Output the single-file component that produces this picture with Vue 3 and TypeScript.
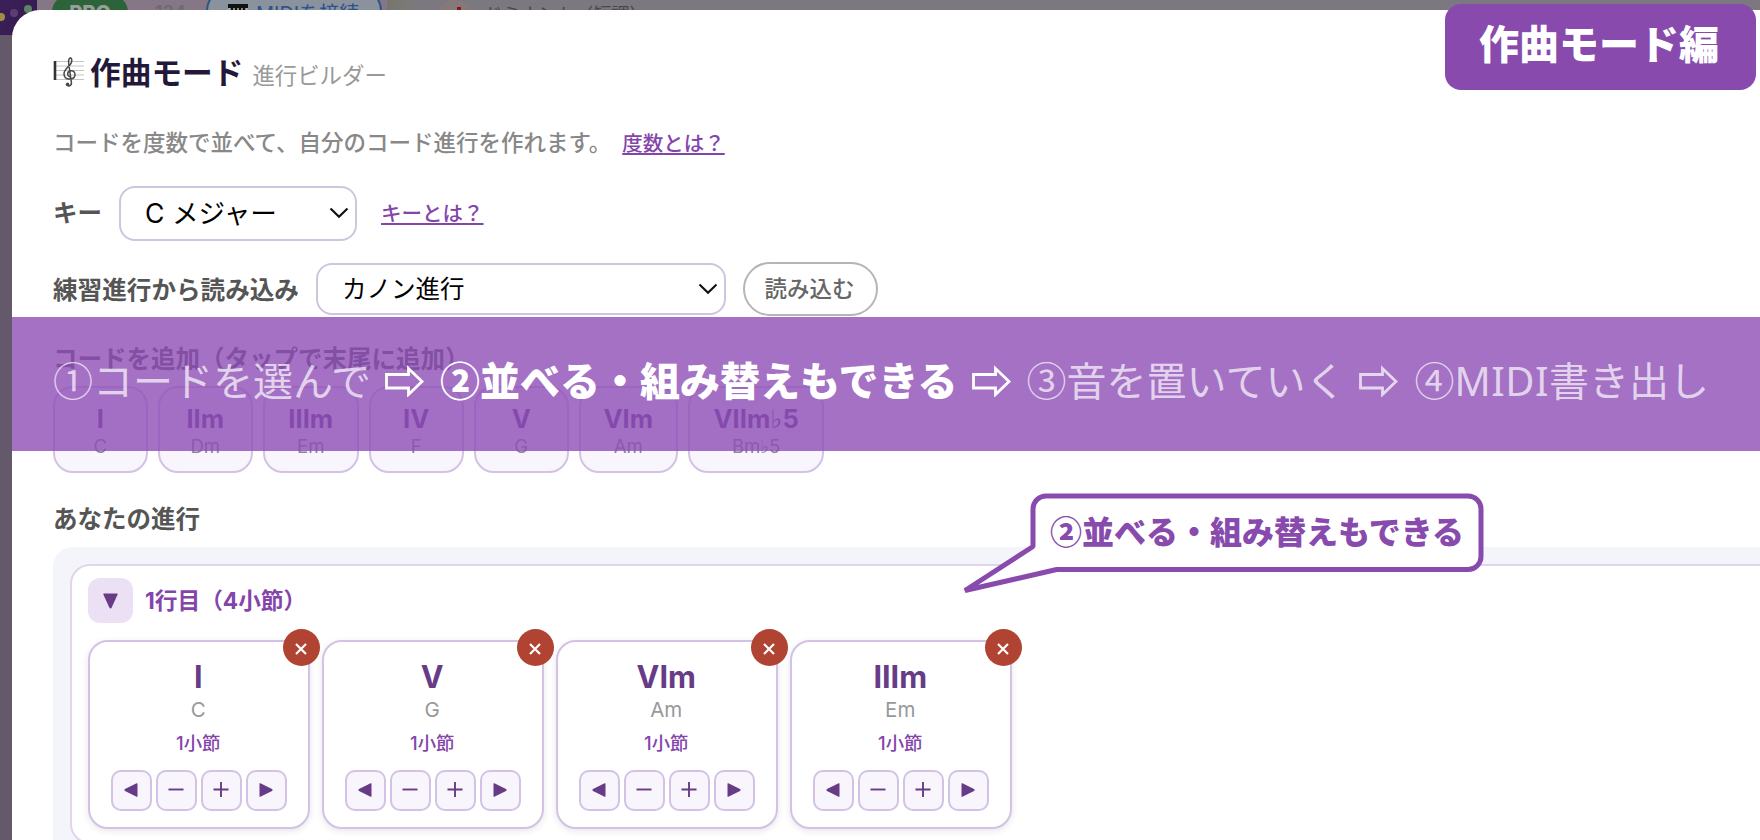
<script setup lang="ts">
interface Chord {
  degree: string
  name: string
}

const palette: Chord[] = [
  { degree: 'I', name: 'C' },
  { degree: 'IIm', name: 'Dm' },
  { degree: 'IIIm', name: 'Em' },
  { degree: 'IV', name: 'F' },
  { degree: 'V', name: 'G' },
  { degree: 'VIm', name: 'Am' },
  { degree: 'VIIm♭5', name: 'Bm♭5' },
]

const progression: Chord[] = [
  { degree: 'I', name: 'C' },
  { degree: 'V', name: 'G' },
  { degree: 'VIm', name: 'Am' },
  { degree: 'IIIm', name: 'Em' },
]
</script>

<template>
  <div class="screen">
    <div class="backdrop">
      <div class="app-logo"><i class="dot yellow"></i><i class="dot violet"></i><i class="dot green"></i></div>
      <div class="app-bar">
        <span class="pro">PRO</span>
        <span class="count">134</span>
        <span class="midi">
          <svg width="20" height="16" viewBox="0 0 20 16"><path fill="#111" d="M0 0h20v4H0z" /><path fill="#aaa" d="M0 4h20v12H0z" /><path stroke="#111" stroke-width="2.4" d="M4 4v8M8 4v8M12 4v8M16 4v8" /></svg>
          MIDIを接続
        </span>
      </div>
      <div class="side">
        <span class="side-icon"><i></i></span>
        <span class="side-text">ドミナント（短調）</span>
      </div>
    </div>

    <section class="modal">
      <h1 class="title">
        <svg class="score" width="32" height="32" viewBox="0 0 32 32" fill="none">
          <path d="M3 5.5h28M3 10h28M3 14.500h28M3 19h28M3 23.500h28" stroke="#c4c4c4" stroke-width="1" />
          <path d="M2 5v19" stroke="#333" stroke-width="2.600" />
          <path d="M13.500 28.500c1.500 2.400 5.300 1.500 4.900-1.800L15.700 7.500c-.4-3 .5-5.400 2-5.700 1.500.8 1.500 4.300-.3 6.500-2.200 2.700-6.400 5.200-6.400 9.500 0 3.600 2.600 5.300 5.600 5.300 3.200 0 5.400-1.800 5.400-4.500 0-2.300-1.600-3.800-3.600-3.800-2.200 0-3.700 1.500-3.700 3.300 0 1.500.8 2.400 1.900 2.700" stroke="#484848" stroke-width="1.500" stroke-linecap="round" />
          <circle cx="14.600" cy="28.300" r="1.700" fill="#484848" />
        </svg>
        <span class="title-main">作曲モード</span>
        <span class="title-sub">進行ビルダー</span>
      </h1>

      <p class="desc">コードを度数で並べて、自分のコード進行を作れます。<a class="link">度数とは？</a></p>

      <div class="row key-row">
        <span class="label">キー</span>
        <div class="select key-select">
          <span>C メジャー</span>
          <svg width="20" height="12" viewBox="0 0 20 12"><path d="M1.500 1.500 10 9.700l8.500-8.200" fill="none" stroke="#111" stroke-width="2.200" /></svg>
        </div>
        <a class="link">キーとは？</a>
      </div>

      <div class="row load-row">
        <span class="label">練習進行から読み込み</span>
        <div class="select load-select">
          <span>カノン進行</span>
          <svg width="20" height="12" viewBox="0 0 20 12"><path d="M1.500 1.500 10 9.700l8.500-8.200" fill="none" stroke="#111" stroke-width="2.200" /></svg>
        </div>
        <button class="load">読み込む</button>
      </div>

      <div class="label add-label">コードを追加（タップで末尾に追加）</div>
      <div class="palette">
        <button v-for="c in palette" :key="c.degree" class="chip">
          <b>{{ c.degree }}</b>
          <span>{{ c.name }}</span>
        </button>
      </div>

      <div class="label own-label">あなたの進行</div>
      <div class="tray">
        <div class="line">
          <div class="line-head">
            <button class="fold"><svg width="15" height="16" viewBox="0 0 15 16"><path d="M1 .5h13q1 0 .6 1L8.700 14.500q-1.200 2-2.400 0L.4 1.500Q0 .5 1 .5z" fill="#673b86" /></svg></button>
            <span>1行目（4小節）</span>
          </div>
          <div class="cards">
            <article v-for="c in progression" :key="c.degree" class="card">
              <button class="remove"><svg width="12" height="12" viewBox="0 0 12 12"><path d="m1 1 10 10M11 1 1 11" stroke="#fff" stroke-width="2.200" /></svg></button>
              <b class="degree">{{ c.degree }}</b>
              <span class="name">{{ c.name }}</span>
              <span class="bars">1小節</span>
              <div class="tools">
                <button><svg width="14" height="14" viewBox="0 0 14 14"><path d="M13.500.8v12.400q0 .8-.9.600L1 8q-1.200-1 0-2L12.600.2q.9-.2.900.6z" fill="#673b86" /></svg></button>
                <button><svg width="16" height="16" viewBox="0 0 16 16"><path d="M.5 7.500h15" stroke="#673b86" stroke-width="1.900" /></svg></button>
                <button><svg width="16" height="16" viewBox="0 0 16 16"><path d="M.5 7.500h15M8 0v15" stroke="#673b86" stroke-width="1.900" /></svg></button>
                <button><svg width="14" height="14" viewBox="0 0 14 14"><path d="M.5.8v12.400q0 .8.900.600L13 8q1.200-1 0-2L1.400.2Q.5 0 .5.800z" fill="#673b86" /></svg></button>
              </div>
            </article>
          </div>
        </div>
      </div>
    </section>

    <div class="banner">
      <span class="step">①コードを選んで</span>
      <svg class="arrow" width="40" height="32" viewBox="0 0 40 32"><path d="M1.500 9.500h22V3.500l13.500 13-13.500 13v-6.500h-22z" fill="none" stroke="#fff" stroke-width="2.800" /></svg>
      <span class="step current">②並べる・組み替えもできる</span>
      <svg class="arrow" width="40" height="32" viewBox="0 0 40 32"><path d="M1.500 9.500h22V3.500l13.500 13-13.500 13v-6.500h-22z" fill="none" stroke="#fff" stroke-width="2.800" /></svg>
      <span class="step">③音を置いていく</span>
      <svg class="arrow dim" width="40" height="32" viewBox="0 0 40 32"><path d="M1.500 9.500h22V3.500l13.500 13-13.500 13v-6.500h-22z" fill="none" stroke="#fff" stroke-width="2.800" /></svg>
      <span class="step">④<span class="latin">MIDI</span>書き出し</span>
    </div>

    <div class="callout">
      <svg width="526" height="100" viewBox="0 0 526 100">
        <path d="M88 2h422a13 13 0 0 1 13 13v47.500a13 13 0 0 1-13 13H98.700L7 96.500 75 52.500V15a13 13 0 0 1 13-13z" fill="#fff" stroke="#884bad" stroke-width="5" stroke-linejoin="bevel" />
      </svg>
      <span>②並べる・組み替えもできる</span>
    </div>

    <div class="badge">作曲モード編</div>
  </div>
</template>

<style>
html,
body {
  margin: 0;
  overflow: hidden;
}
</style>

<style scoped>
.screen {
  position: relative;
  width: 1760px;
  height: 840px;
  overflow: hidden;
  background: #63596b;
  font-family: Inter, 'Noto Sans CJK JP', sans-serif;
}
.screen * {
  box-sizing: border-box;
}
button {
  font: inherit;
  padding: 0;
  margin: 0;
}
.backdrop {
  display: flex;
  height: 35px;
}
.app-logo {
  position: relative;
  width: 37px;
  height: 35px;
  background: linear-gradient(120deg, #3d2059, #321a4b);
  border-radius: 0 0 4px 0;
}
.dot {
  position: absolute;
  width: 8px;
  height: 8px;
  border-radius: 50%;
}
.yellow { left: -3px; top: 13px; background: #a38c45; }
.violet { left: 10px; top: 9px; background: #5b3d73; }
.green { left: 24px; top: 5px; background: #5c8565; }
.app-bar {
  position: relative;
  display: flex;
  width: 350px;
  height: 10px;
  overflow: hidden;
  background: #857786;
}
.pro {
  width: 76px;
  height: 34px;
  margin: -5px 0 0 15px;
  border-radius: 17px;
  background: #2c6338;
  color: #9a9e9a;
  font-size: 20px;
  font-weight: 800;
  line-height: 37px;
  text-align: center;
}
.count {
  margin: 4px 0 0 27px;
  width: 51px;
  color: #70696f;
  font-size: 18px;
  line-height: 18px;
  font-weight: 600;
}
.midi {
  display: flex;
  width: 176px;
  height: 50px;
  margin-top: -13px;
  padding: 14px 0 0 20px;
  gap: 8px;
  border: 2px solid #2c5488;
  border-radius: 24px;
  background: #8a929e;
  color: #2c5488;
  font-size: 20px;
  line-height: 22px;
  white-space: nowrap;
}
.midi svg {
  margin-top: 1px;
}
.side {
  display: flex;
  flex: 1;
  height: 10px;
  overflow: hidden;
  background: linear-gradient(90deg, #78756f, #7b7a77 20px, #7c7880 36px);
}
.side-icon {
  width: 36px;
  height: 36px;
  margin: 0 11px 0 50px;
  border-radius: 50%;
  background: #85797a;
}
.side-icon i {
  display: block;
  width: 4px;
  height: 4px;
  margin: 7px 0 0 20px;
  background: #8c1418;
}
.side-text {
  margin-top: 4px;
  color: #4b474d;
  font-size: 18.200px;
  line-height: 20px;
}
.modal {
  position: absolute;
  left: 12px;
  top: 10px;
  width: 1800px;
  height: 860px;
  padding-left: 41px;
  border-radius: 28px 0 0 0;
  background: #fff;
}
.title {
  display: flex;
  align-items: center;
  height: 44px;
  margin: 41px 0 0;
}
.score {
  margin-right: 5px;
  margin-top: -2px;
}
.title-main {
  color: #24183a;
  font-size: 30.700px;
  font-weight: 700;
  line-height: 44px;
}
.title-sub {
  margin: 2px 0 0 9px;
  color: #999;
  font-size: 22.400px;
  font-weight: 400;
}
.desc {
  display: flex;
  align-items: center;
  height: 34px;
  margin: 29px 0 0;
  color: #888;
  font-size: 22.500px;
  font-weight: 500;
}
.link {
  color: #8445ab;
  font-size: 20.500px;
  font-weight: 500;
  text-decoration: underline;
  text-decoration-thickness: 2px;
  text-underline-offset: 2px;
}
.desc .link {
  margin: 1px 0 0 11px;
}
.row {
  display: flex;
  align-items: center;
}
.key-row {
  height: 56px;
  margin-top: 27px;
}
.key-row > .label,
.load-row > .label,
.key-row > .link,
.select > span {
  position: relative;
  top: -1.500px;
}
.load-row {
  height: 54px;
  margin-top: 21px;
}
.label {
  color: #555;
  font-size: 24.500px;
  font-weight: 700;
  white-space: nowrap;
}
.load-row > .label {
  width: 245px;
  font-size: 24.600px;
}
.select {
  display: flex;
  align-items: center;
  justify-content: space-between;
  border: 2px solid #cdc6df;
  border-radius: 16px;
  color: #000;
}
.key-select {
  width: 238px;
  height: 55px;
  margin: 0 24px 0 17px;
  padding: 0 6px 0 24px;
  font-size: 26.600px;
}
.load-select {
  width: 410px;
  height: 52px;
  margin: 0 17px 0 18px;
  padding: 0 6px 0 24px;
  font-size: 24.500px;
}
.load {
  width: 135px;
  height: 54px;
  padding: 0 2px 4px 0;
  border: 2px solid #b5b5b5;
  border-radius: 27px;
  background: #fff;
  color: #666;
  font-size: 22.500px;
  font-weight: 500;
}
.add-label {
  margin-top: 25px;
  line-height: 36px;
}
.palette {
  display: flex;
  gap: 10.500px;
  margin-top: 9px;
}
.chip {
  display: flex;
  flex-direction: column;
  align-items: center;
  min-width: 94.500px;
  height: 87px;
  padding: 16px 22.500px 0;
  border: 2px solid #d3c2e5;
  border-radius: 20px;
  background: #f8f5fd;
  font-family: Inter, 'DejaVu Sans', sans-serif;
}
.chip:nth-child(3) {
  min-width: 95.500px;
}
.chip:last-child {
  min-width: 136px;
}
.chip b {
  color: #673b86;
  font-size: 25.600px;
  font-weight: 700;
  line-height: 30px;
}
.chip span {
  color: #8d8296;
  font-size: 18.600px;
  line-height: 24px;
}
.own-label {
  margin-top: 28px;
  line-height: 36px;
}
.tray {
  width: 1760px;
  height: 320px;
  margin-top: 10px;
  padding: 17px;
  border-radius: 20px;
  background: #f4f5fa;
}
.line {
  height: 280px;
  padding: 12px 16px;
  border: 2px solid #e1d5ee;
  border-radius: 20px;
  background: #fff;
}
.line-head {
  display: flex;
  align-items: center;
  height: 45px;
  gap: 12px;
  color: #8445ab;
  font-size: 22.700px;
  font-weight: 700;
}
.line-head span {
  margin-top: -3px;
}
.fold {
  display: flex;
  align-items: center;
  justify-content: center;
  width: 45px;
  height: 45px;
  border: 0;
  border-radius: 12px;
  background: #ece0f5;
}
.cards {
  display: flex;
  gap: 12px;
  margin-top: 17px;
}
.card {
  position: relative;
  display: flex;
  flex-direction: column;
  align-items: center;
  width: 222px;
  height: 189px;
  border: 2px solid #d3c2e5;
  border-radius: 20px;
  background: #fff;
  box-shadow: 0 2px 7px rgba(0, 0, 0, 0.1);
}
.card > b,
.card > span {
  padding-right: 1.500px;
}
.remove {
  position: absolute;
  right: -12px;
  top: -13px;
  display: flex;
  align-items: center;
  justify-content: center;
  width: 37px;
  height: 37px;
  padding: 3px 1px 0 0;
  border: 0;
  border-radius: 50%;
  background: #b04332;
}
.degree {
  margin-top: 17px;
  color: #673b86;
  font-size: 30.600px;
  line-height: 36px;
}
.name {
  margin-top: 1px;
  color: #999;
  font-size: 20.500px;
  line-height: 28px;
}
.bars {
  margin-top: 5px;
  color: #8445ab;
  font-size: 18.400px;
  font-weight: 500;
  line-height: 28px;
}
.tools {
  display: flex;
  gap: 4px;
  margin-top: 13px;
}
.tools button {
  display: flex;
  align-items: center;
  justify-content: center;
  width: 41px;
  height: 41px;
  padding: 0 2px 1px 0;
  border: 2px solid #d3c2e5;
  border-radius: 10px;
  background: #f8f5fd;
}
.banner {
  position: absolute;
  left: 12px;
  top: 317px;
  display: flex;
  align-items: center;
  width: 1748px;
  height: 133.500px;
  padding: 0 0 6px 41px;
  background: rgba(141, 78, 182, 0.8);
  color: #fff;
  font-family: 'Noto Sans CJK JP', sans-serif;
  font-size: 40px;
  white-space: nowrap;
}
.step {
  margin-top: -4px;
  color: rgba(255, 255, 255, 0.7);
}
.current {
  color: #fff;
  font-weight: 900;
}
.arrow {
  margin: 0 15px 0 14px;
}
.dim {
  opacity: 0.72;
}
.latin {
  font-family: 'Noto Sans', sans-serif;
  letter-spacing: 0.500px;
}
.callout {
  position: absolute;
  left: 958px;
  top: 494px;
}
.callout svg {
  display: block;
  overflow: visible;
}
.callout span {
  position: absolute;
  left: 92px;
  top: 13px;
  color: #884bad;
  font-family: 'Noto Sans CJK JP', sans-serif;
  font-size: 32px;
  font-weight: 900;
  line-height: 46px;
  white-space: nowrap;
}
.badge {
  position: absolute;
  left: 1445px;
  top: 4px;
  width: 311px;
  height: 86px;
  padding-right: 3px;
  border-radius: 16px;
  background: #884bad;
  color: #fff;
  font-family: 'Noto Sans CJK JP', sans-serif;
  font-size: 40px;
  font-weight: 900;
  line-height: 76px;
  text-align: center;
}
</style>
